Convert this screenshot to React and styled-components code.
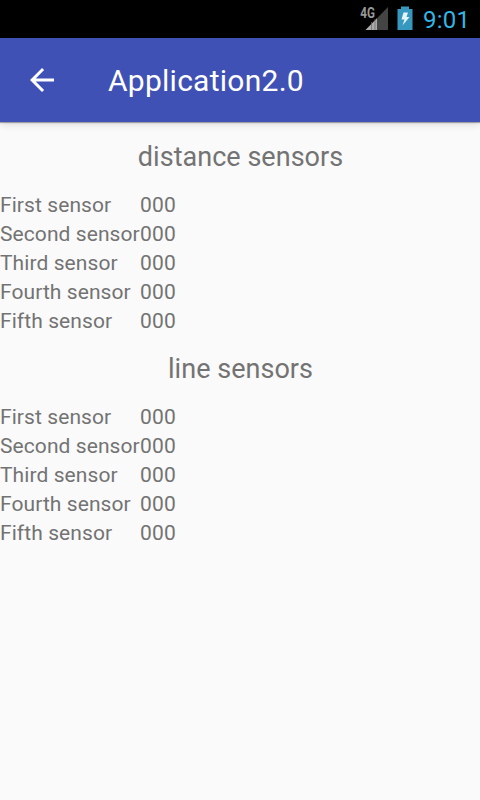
import React from "react";
import styled, { createGlobalStyle } from "styled-components";

const Global = createGlobalStyle`
  body { margin: 0; background: #fafafa; }
  * { box-sizing: border-box; }
`;
const Screen = styled.div`
  width: 480px; height: 800px; overflow: hidden;
  background: #fafafa; color: #737373;
  font-family: Roboto, sans-serif;
  display: flex; flex-direction: column;
`;
const StatusBar = styled.header`
  height: 38px; flex: none; background: #000; color: #33b5e5;
  display: flex; justify-content: flex-end; align-items: flex-start;
  padding-right: 11px;
`;
const StatusIcons = styled.svg`
  width: 64px; height: 38px; flex: none;
`;
const NetworkLabel = styled.text`
  font: 700 14px Roboto, sans-serif; fill: #999;
`;
const Clock = styled.time`
  width: 46px; font-size: 24px; line-height: 40px; font-weight: 400;
  letter-spacing: 0.2px; white-space: nowrap;
`;
const Toolbar = styled.nav`
  height: 84px; flex: none; background: #3f51b5; color: #fff;
  display: flex; align-items: center; padding-left: 24px;
  box-shadow: 0 1px 1px rgba(0,0,0,.3), 0 2px 8px rgba(0,0,0,.15);
`;
const BackIcon = styled.svg`
  width: 36px; height: 36px; flex: none;
`;
const Title = styled.h1`
  margin: 2px 0 0 48px; font-size: 30px; font-weight: 400; line-height: 36px;
  letter-spacing: 0.26px;
`;
const Content = styled.main`
  padding-top: 16px;
`;
const Section = styled.section`
  height: 212px;
`;
const Heading = styled.h2`
  margin: 0 0 15px; padding-left: 1px; height: 38px; font-size: 27px; line-height: 38px;
  font-weight: 400; text-align: center; letter-spacing: 0.03px;
`;
const Row = styled.div`
  display: grid; grid-template-columns: 140px auto; height: 29px;
  font-size: 21px; line-height: 29px; white-space: nowrap; letter-spacing: 0.08px;
`;
const Label = styled.span``;
const Value = styled.span`
  letter-spacing: 0.25px;
`;

const names = ["First", "Second", "Third", "Fourth", "Fifth"];
const groups = ["distance sensors", "line sensors"];

export default function App() {
  return (
    <Screen>
      <Global />
      <StatusBar>
        <StatusIcons viewBox="359 0 64 38">
          <path d="M388 7V30H365.5Z" fill="#444" />
          <path d="M377 18.2V30H365.5Z" fill="#aaa" />
          <path d="M371.5 22V30M375 19V30" stroke="#666" strokeWidth="0.7" />
          <NetworkLabel x="360.3" y="17.5" textLength="14.7" lengthAdjust="spacingAndGlyphs">4G</NetworkLabel>
          <path d="M401 6.5H409V9H412.5V30H397.5V9H401Z" fill="#3798bf" />
          <path d="M403.5 12.5H408L406.5 17H409.5L402.5 25.5L404.5 19.5H401.5Z" fill="#e6f5fa" />
        </StatusIcons>
        <Clock>9:01</Clock>
      </StatusBar>
      <Toolbar>
        <BackIcon viewBox="0 0 24 24"><path fill="#fff" d="M20 11H7.83l5.59-5.59L12 4l-8 8 8 8 1.41-1.41L7.83 13H20v-2z" /></BackIcon>
        <Title>Application2.0</Title>
      </Toolbar>
      <Content>
        {groups.map((g) => (
          <Section key={g}>
            <Heading>{g}</Heading>
            {names.map((n) => (
              <Row key={n}><Label>{n} sensor</Label><Value>000</Value></Row>
            ))}
          </Section>
        ))}
      </Content>
    </Screen>
  );
}
